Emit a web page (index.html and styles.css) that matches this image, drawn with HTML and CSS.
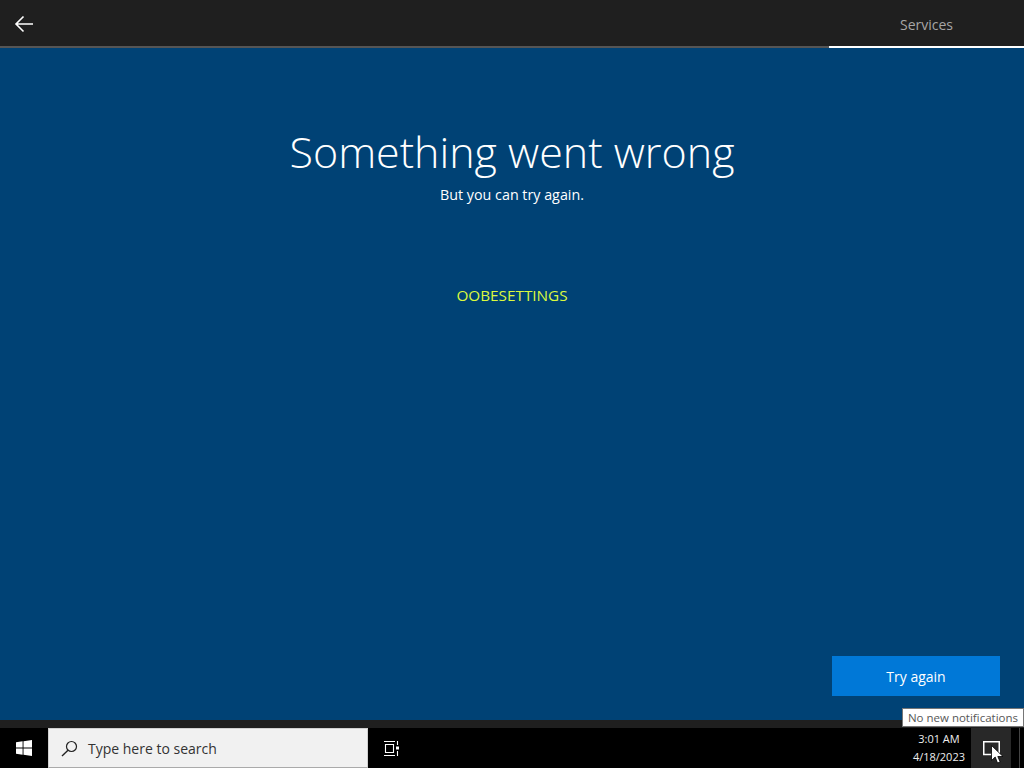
FILE: index.html
```html
<!DOCTYPE html>
<html lang="en">
<head>
<meta charset="utf-8">
<title>Something went wrong</title>
<link rel="stylesheet" href="styles.css">
</head>
<body>
<header class="topbar">
  <div class="back">
    <svg class="back-icon" width="20" height="18" viewBox="0 0 20 18"><path d="M19 9H2M9.500 1.500 2 9l7.500 7.500" fill="none" stroke="#fff" stroke-width="1.600"/></svg>
  </div>
  <div class="tab">Services</div>
</header>
<main class="content">
  <h1 class="title">Something went wrong</h1>
  <p class="subtitle">But you can try again.</p>
  <p class="code">OOBESETTINGS</p>
  <div class="actions"><button class="primary">Try again</button></div>
</main>
<div class="strip"></div>
<footer class="taskbar">
  <div class="start">
    <svg width="16" height="16" viewBox="0 0 16 16"><path d="M0 2.300 6.600 1.300V7.500H0ZM7.500 1.200 16 0V7.500H7.500ZM0 8.500H6.600V14.700L0 13.700ZM7.500 8.500H16V16L7.500 14.800Z" fill="#fff"/></svg>
  </div>
  <div class="search">
    <svg class="search-icon" width="17" height="17" viewBox="0 0 17 17"><circle cx="10.500" cy="6.500" r="5" fill="none" stroke="#222" stroke-width="1.200"/><path d="M7 10.200 1 16" fill="none" stroke="#222" stroke-width="1.400"/></svg>
    <span>Type here to search</span>
  </div>
  <div class="taskview">
    <svg width="16" height="15" viewBox="0 0 16 15"><path d="M0 .5H11M0 14.500H11M1.500 3.500H9.500V11.500H1.500Z" fill="none" stroke="#fff" stroke-width="1.100"/><path d="M13.500 0V4M13.500 10V15" stroke="#fff" stroke-width="1.100"/><rect x="12" y="5.500" width="3" height="3" fill="#fff"/></svg>
  </div>
  <div class="spacer"></div>
  <div class="clock"><span>3:01 AM</span><span>4/18/2023</span></div>
  <div class="notify">
    <svg width="17" height="15" viewBox="0 0 17 15"><path d="M.75.75H16.250V11.500H10L8.500 13.500H.75Z" fill="none" stroke="#fff" stroke-width="1.500"/></svg>
  </div>
  <div class="show-desktop"></div>
  <div class="tooltip">No new notifications</div>
  <svg class="cursor" width="13" height="19" viewBox="0 0 13 19"><path d="M.5.5V15.500L4.200 12 6.500 18 9.200 17 6.800 11.500H12Z" fill="#fff" stroke="#000" stroke-width=".8"/></svg>
</footer>
</body>
</html>
```
FILE: styles.css
```css
* { box-sizing: border-box; }
html, body { margin: 0; height: 100%; }
body {
  display: flex;
  flex-direction: column;
  height: 768px;
  overflow: hidden;
  background: #004275;
  color: #fff;
  font-family: "Open Sans", "Noto Sans", sans-serif;
}
.topbar {
  flex: none;
  height: 48px;
  display: flex;
  justify-content: space-between;
  background: #1f1f1f;
  border-bottom: 2px solid #555;
}
.back {
  width: 48px;
  padding-top: 2px;
  display: flex;
  align-items: center;
  justify-content: center;
}
.tab {
  width: 195px;
  height: 48px;
  padding-top: 15px;
  text-align: center;
  font-size: 14px;
  line-height: 20px;
  color: #a6a6a6;
  border-bottom: 2px solid #fff;
}
.content {
  flex: 1;
  display: flex;
  flex-direction: column;
  align-items: center;
  padding-top: 70px;
  position: relative;
}
.title {
  margin: 0;
  font-size: 43px;
  font-weight: 300;
  line-height: 68px;
}
.subtitle {
  margin: -1px 0 0;
  font-size: 14.300px;
  line-height: 20px;
}
.code {
  margin: 80px 0 0;
  font-size: 15.300px;
  line-height: 20px;
  color: #dcf93e;
}
.actions {
  margin-top: auto;
  align-self: flex-end;
  padding: 0 24px 24px 0;
}
.primary {
  display: block;
  width: 168px;
  height: 40px;
  border: 0;
  background: #0078d7;
  color: #fff;
  font: inherit;
  font-size: 14px;
}
.strip { flex: none; height: 8px; background: #1f1f1f; }
.taskbar {
  flex: none;
  height: 40px;
  display: flex;
  align-items: stretch;
  background: #000;
  position: relative;
}
.start {
  width: 48px;
  display: flex;
  align-items: center;
  justify-content: center;
}
.search {
  width: 320px;
  display: flex;
  align-items: center;
  gap: 10px;
  padding-left: 12px;
  background: #f1f1f1;
  border: 1px solid #d0d0d0;
  border-bottom-color: #aaa;
  font-size: 14px;
  color: #333;
}
.taskview {
  width: 48px;
  display: flex;
  align-items: center;
  justify-content: center;
}
.spacer { flex: 1; }
.clock {
  display: flex;
  flex-direction: column;
  align-items: center;
  justify-content: center;
  padding-right: 6px;
  font-size: 11px;
  line-height: 18px;
  color: #eee;
}
.notify {
  width: 40px;
  display: flex;
  align-items: center;
  justify-content: center;
  background: #282828;
}
.show-desktop {
  width: 5px;
  margin-left: 8px;
  border-left: 1px solid #444;
}
.tooltip {
  position: absolute;
  right: 0;
  top: -20px;
  height: 19px;
  padding: 0 5px;
  background: #fff;
  border: 1px solid #767676;
  color: #575757;
  font-size: 11.500px;
  line-height: 17px;
  white-space: nowrap;
}
.cursor { position: absolute; left: 991px; top: 17px; }
```
